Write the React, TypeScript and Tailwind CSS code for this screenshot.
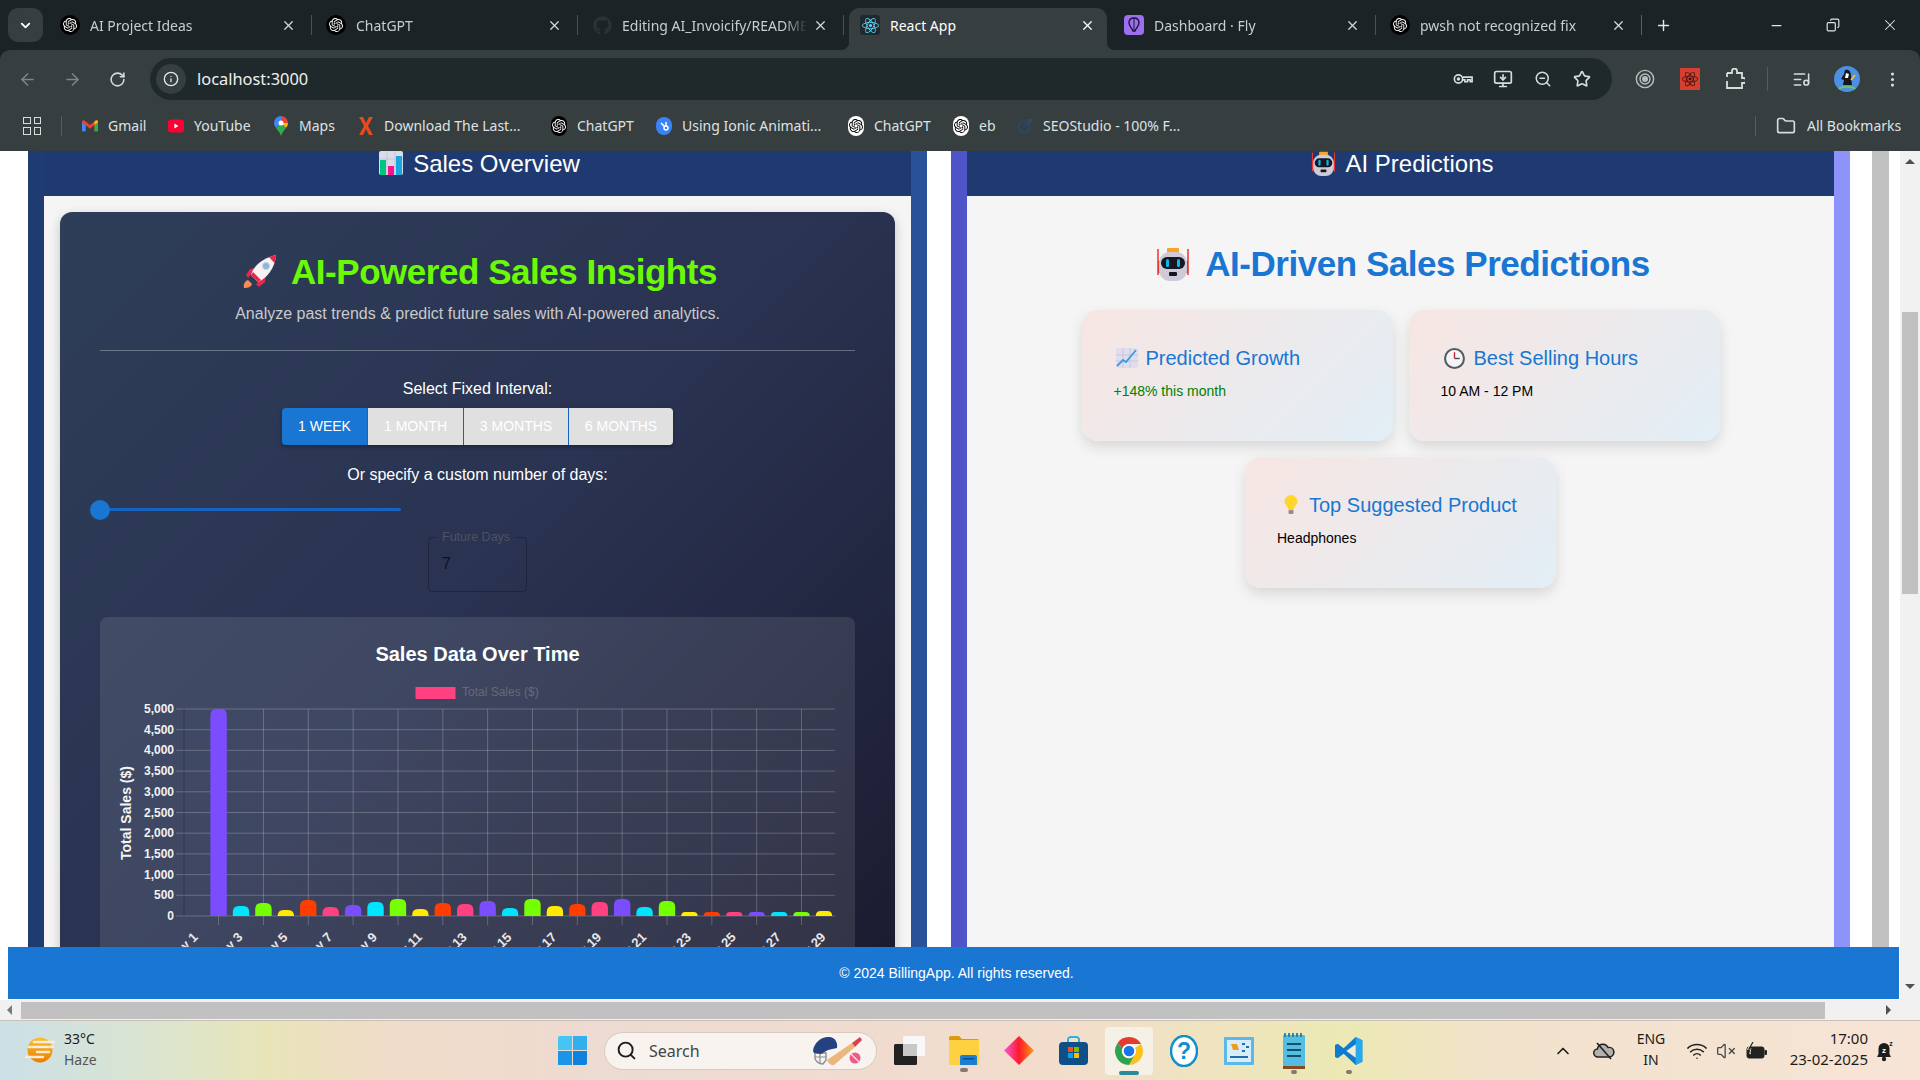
import {
  ArrowLeft,
  ArrowRight,
  ChevronDown,
  ChevronUp,
  Copy,
  Folder,
  Info,
  ListMusic,
  MonitorDown,
  MoreVertical,
  Minus,
  Plus,
  RotateCw,
  Search,
  Star,
  VolumeX,
  Wifi,
  X,
  ZoomOut,
} from "lucide-react";
import { FaGithub } from "react-icons/fa";
import { SiOpenai, SiReact } from "react-icons/si";

const chromeFont = "font-['Noto_Sans',sans-serif]";

function GptIcon({ white = false }: { white?: boolean }) {
  return (
    <span className={`flex h-[20px] w-[20px] items-center justify-center rounded-full ${white ? "bg-white" : "bg-black"}`}>
      <SiOpenai size={14} color={white ? "#000" : "#fff"} />
    </span>
  );
}

function Tab({ icon, label, active, last }: { icon: React.ReactNode; label: string; active?: boolean; last?: boolean }) {
  if (active) {
    return (
      <div className="relative ml-[3px] mr-[5px] mt-[8px] flex h-[42px] w-[258px] items-center rounded-t-[10px] bg-[#363e40] pb-[8px] pl-[11px]">
        <span className="absolute bottom-0 left-[-8px] h-[8px] w-[8px] bg-[radial-gradient(circle_at_0_0,transparent_8px,#363e40_8.5px)]" />
        <span className="absolute bottom-0 right-[-8px] h-[8px] w-[8px] bg-[radial-gradient(circle_at_100%_0,transparent_8px,#363e40_8.5px)]" />
        <span className="flex h-[20px] w-[20px] shrink-0 items-center justify-center rounded-[3px] bg-[#22292c]">{icon}</span>
        <span className="ml-[10px] flex-1 truncate text-[14px] text-white">{label}</span>
        <X size={15} color="#fff" className="mr-[12px]" />
      </div>
    );
  }
  return (
    <div className="mt-[8px] flex h-[42px] w-[266px] items-center pb-[8px] pl-[12px]">
      <span className="flex h-[20px] w-[20px] shrink-0 items-center justify-center">{icon}</span>
      <span className="ml-[10px] flex-1 overflow-hidden whitespace-nowrap text-[14px] text-[#c9cdce] [mask-image:linear-gradient(90deg,#000_88%,transparent)]">{label}</span>
      <X size={15} color="#d5d8d9" className="ml-[6px] shrink-0" />
      <span className={`ml-[15px] mr-[2px] h-[20px] w-px shrink-0 ${last ? "bg-[#5a6163]" : "bg-[#4a5255]"}`} />
    </div>
  );
}

function TabStrip() {
  return (
    <div className={`flex h-[50px] shrink-0 items-start bg-[#1c2326] ${chromeFont}`}>
      <div className="ml-[8px] mr-[5px] mt-[8px] flex h-[34px] w-[35px] items-center justify-center rounded-[10px] bg-[#363e40]">
        <ChevronDown size={15} color="#fff" strokeWidth={3} />
      </div>
      <Tab icon={<GptIcon />} label="AI Project Ideas" />
      <Tab icon={<GptIcon />} label="ChatGPT" />
      <Tab icon={<FaGithub size={19} color="#2b3235" />} label="Editing AI_Invoicify/README.md" />
      <Tab active icon={<SiReact size={17} color="#61dafb" />} label="React App" />
      <Tab
        icon={
          <span className="flex h-[20px] w-[20px] items-center justify-center rounded-[4px] bg-[#9d6ff0]">
            <svg width="12" height="16" viewBox="0 0 12 16">
              <path d="M6 1C3 1 1 3 1 6c0 3 3 5 4 8h2c1-3 4-5 4-8 0-3-2-5-5-5Z" fill="none" stroke="#1c1530" strokeWidth="1.4" />
              <path d="M6 1v13" stroke="#1c1530" strokeWidth="1" />
            </svg>
          </span>
        }
        label="Dashboard · Fly"
      />
      <Tab last icon={<GptIcon />} label="pwsh not recognized fix" />
      <Plus size={17} color="#e2e4e5" className="ml-[11px] mt-[17px]" />
      <Minus size={15} color="#e2e4e5" className="ml-[97px] mt-[18px]" />
      <Copy size={14} color="#e2e4e5" className="ml-[42px] mt-[18px] -scale-x-100" />
      <X size={18} color="#e2e4e5" strokeWidth={1.4} className="ml-[41px] mt-[16px]" />
    </div>
  );
}

function ToolIcon({ children, className }: { children: React.ReactNode; className: string }) {
  return <span className={`flex h-[20px] w-[20px] shrink-0 items-center justify-center ${className}`}>{children}</span>;
}

function Toolbar() {
  return (
    <div className="h-[50px] shrink-0 bg-[#1c2326]">
      <div className={`flex h-[50px] items-center rounded-t-[10px] bg-[#363e40] pt-[8px] ${chromeFont}`}>
        <ToolIcon className="ml-[17px]"><ArrowLeft size={19} color="#7e8587" /></ToolIcon>
        <ToolIcon className="ml-[25px]"><ArrowRight size={19} color="#7e8587" /></ToolIcon>
        <ToolIcon className="ml-[25px]"><RotateCw size={17} color="#d8dbdc" strokeWidth={2.2} /></ToolIcon>
        <div className="ml-[23px] flex h-[42px] w-[1462px] shrink-0 items-center rounded-full bg-[#1f282b]">
          <span className="ml-[6px] flex h-[30px] w-[30px] items-center justify-center rounded-full bg-[#363e40]">
            <Info size={16} color="#e4e6e7" />
          </span>
          <span className="ml-[11px] w-[112px] whitespace-nowrap text-[16.4px] text-[#eef0f0]">localhost:3000</span>
          <ToolIcon className="ml-[1144px]">
            <svg width="22" height="14" viewBox="0 0 22 14" fill="none" stroke="#d8dbdc" strokeWidth="1.800">
              <circle cx="6" cy="7" r="4.500" />
              <circle cx="6" cy="7" r="1" fill="#d8dbdc" />
              <path d="M10.500 5H21v5h-2V8h-3v2h-3V8h-2.500" />
            </svg>
          </ToolIcon>
          <ToolIcon className="ml-[20px]"><MonitorDown size={20} color="#d8dbdc" /></ToolIcon>
          <ToolIcon className="ml-[20px]"><ZoomOut size={18} color="#d8dbdc" /></ToolIcon>
          <ToolIcon className="ml-[19px]"><Star size={18} color="#d8dbdc" strokeWidth={2.2} /></ToolIcon>
        </div>
        <ToolIcon className="ml-[23px]">
          <svg width="22" height="22" viewBox="0 0 22 22" fill="none" stroke="#b8bcbd" strokeWidth="1.6">
            <circle cx="11" cy="11" r="9.5" />
            <circle cx="11" cy="11" r="5.5" />
            <circle cx="11" cy="11" r="2.5" fill="#b8bcbd" />
          </svg>
        </ToolIcon>
        <ToolIcon className="ml-[25px]">
          <span className="flex h-[22px] w-[20px] shrink-0 items-center justify-center bg-[#d63f2f]">
            <SiReact size={16} color="#3b1410" />
          </span>
        </ToolIcon>
        <ToolIcon className="ml-[25px]">
          <svg width="20" height="22" viewBox="0 0 20 22" fill="none" stroke="#d8dbdc" strokeWidth="1.800">
            <path d="M2 5h5V3a2.500 2.500 0 0 1 5 0v2h5v5h1.500a2.500 2.500 0 0 1 0 5H17v5H2v-4.500" />
            <path d="M2 5v4M2 13v3" />
          </svg>
        </ToolIcon>
        <span className="ml-[22px] h-[24px] w-px bg-[#555c5f]" />
        <ToolIcon className="ml-[23px]"><ListMusic size={19} color="#d8dbdc" /></ToolIcon>
        <span className="ml-[23px] flex h-[26px] w-[26px] items-center justify-center rounded-full bg-[#4d8fe0]">
          <svg width="20" height="24" viewBox="0 0 20 24">
            <path d="M8 3c4-1 6 2 6 6l1 9H6l1-5-3-1 3-5Z" fill="#14181b" />
            <path d="M9 6l3 1-1 4-3 0Z" fill="#fff" />
            <path d="M14 13l4-5" stroke="#f2c230" strokeWidth="2" />
            <path d="M2 22c2-3 14-3 16 0" stroke="#6ec26a" strokeWidth="2" fill="none" />
          </svg>
        </span>
        <ToolIcon className="ml-[22px]"><MoreVertical size={19} color="#d8dbdc" /></ToolIcon>
      </div>
    </div>
  );
}

function Gmail() {
  return (
    <svg width="18" height="14" viewBox="0 0 18 14">
      <path d="M0 2v10a1 1 0 0 0 1 1h3V6l5 4 5-4v7h3a1 1 0 0 0 1-1V2a2 2 0 0 0-3-1L9 6 3 1a2 2 0 0 0-3 1Z" fill="#ea4335" />
      <path d="M0 2v10a1 1 0 0 0 1 1h3V6L0 3Z" fill="#4285f4" />
      <path d="M18 2v10a1 1 0 0 1-1 1h-3V6l4-3Z" fill="#34a853" />
      <path d="M14 6V2.500L15 1a2 2 0 0 1 3 1v1Z" fill="#fbbc04" />
    </svg>
  );
}

function YouTube() {
  return (
    <svg width="20" height="16" viewBox="0 0 20 16">
      <rect width="20" height="16" rx="4" fill="#ff0033" />
      <path d="M8 5l5 3-5 3Z" fill="#fff" />
    </svg>
  );
}

function MapsPin() {
  return (
    <svg width="14" height="20" viewBox="0 0 14 20">
      <path d="M7 0a7 7 0 0 0-7 7c0 2 1 3.500 2 5l5-5V0Z" fill="#4285f4" />
      <path d="M7 0a7 7 0 0 1 7 7L7 7Z" fill="#ea4335" />
      <path d="M14 7c0 2-1 3.500-2 5L7 7Z" fill="#fbbc04" />
      <path d="M2 12l5-5 5 5c-2 2.500-4 5-5 8-1-3-3-5.500-5-8Z" fill="#34a853" />
      <circle cx="7" cy="7" r="2.500" fill="#fff" />
    </svg>
  );
}

const bookmarks: Array<{ label: string; icon: React.ReactNode; ml: string; w: string }> = [
  { label: "Gmail", icon: <Gmail />, ml: "ml-[20px]", w: "w-[38px]" },
  { label: "YouTube", icon: <YouTube />, ml: "ml-[22px]", w: "w-[58px]" },
  { label: "Maps", icon: <MapsPin />, ml: "ml-[21px]", w: "w-[37px]" },
  {
    label: "Download The Last...",
    icon: (
      <svg width="14" height="18" viewBox="0 0 14 18">
        <path d="M0 0h4l3 6 3-6h4L9 9l5 9h-4l-3-6-3 6H0l5-9Z" fill="#e8491d" />
      </svg>
    ),
    ml: "ml-[22px]",
    w: "w-[137px]",
  },
  { label: "ChatGPT", icon: <GptIcon />, ml: "ml-[30px]", w: "w-[57px]" },
  {
    label: "Using Ionic Animati...",
    icon: (
      <span className="flex h-[18px] w-[18px] items-center justify-center rounded-full bg-[#3b82f6]">
        <svg width="12" height="12" viewBox="0 0 12 12" fill="none" stroke="#fff" strokeWidth="1.500">
          <circle cx="8" cy="8" r="2" />
          <path d="M6.500 6.500 3 3M8 6V2" />
        </svg>
      </span>
    ),
    ml: "ml-[22px]",
    w: "w-[139px]",
  },
  { label: "ChatGPT", icon: <GptIcon white />, ml: "ml-[27px]", w: "w-[57px]" },
  { label: "eb", icon: <GptIcon white />, ml: "ml-[22px]", w: "w-[16px]" },
  {
    label: "SEOStudio - 100% F...",
    icon: (
      <svg width="18" height="18" viewBox="0 0 18 18" fill="none" stroke="#2a4a7c" strokeWidth="1.500">
        <circle cx="8" cy="10" r="6.500" />
        <path d="M8 10 16 2M12 2h4v4" />
      </svg>
    ),
    ml: "ml-[22px]",
    w: "w-[141px]",
  },
];

function BookmarkBar() {
  return (
    <div className={`flex h-[51px] shrink-0 items-center bg-[#363e40] text-[14px] text-[#dfe2e3] ${chromeFont}`}>
      <div className="ml-[23px] grid h-[18px] w-[18px] shrink-0 grid-cols-2 gap-[3px]">
        <span className="border-[1.5px] border-[#d8dbdc]" />
        <span className="border-[1.5px] border-[#d8dbdc]" />
        <span className="border-[1.5px] border-[#d8dbdc]" />
        <span className="border-[1.5px] border-[#d8dbdc]" />
      </div>
      <span className="ml-[20px] h-[20px] w-px shrink-0 bg-[#555c5f]" />
      {bookmarks.map((b, i) => (
        <div key={i} className={`flex shrink-0 items-center ${b.ml}`}>
          <span className="flex h-[20px] w-[16px] items-center justify-center">{b.icon}</span>
          <span className={`ml-[10px] whitespace-nowrap ${b.w}`}>{b.label}</span>
        </div>
      ))}
      <span className="ml-[571px] h-[20px] w-px shrink-0 bg-[#555c5f]" />
      <Folder size={20} color="#d8dbdc" className="ml-[20px] shrink-0" />
      <span className="ml-[11px] whitespace-nowrap">All Bookmarks</span>
    </div>
  );
}

/* ---- emoji drawings ---- */

function BarsEmoji({ className }: { className: string }) {
  return (
    <svg className={className} viewBox="0 0 24 24">
      <rect width="24" height="24" rx="2" fill="#dcdbe8" />
      <path d="M0 8h24M0 16h24M8 0v24M16 0v24" stroke="#c6c4d8" strokeWidth="1" />
      <rect x="1" y="9" width="6" height="15" fill="#00c77d" />
      <rect x="9" y="15" width="6" height="9" fill="#f5158f" />
      <rect x="17" y="5" width="6" height="19" fill="#18a8e0" />
    </svg>
  );
}

function RobotEmoji({ className }: { className: string }) {
  return (
    <svg className={className} viewBox="0 0 34 34">
      <path d="M2 2v26M32 2v26" stroke="#e8352e" strokeWidth="1.500" />
      <rect x="2" y="14" width="2" height="12" fill="#e8352e" />
      <rect x="30" y="14" width="2" height="12" fill="#e8352e" />
      <rect x="11" y="1" width="12" height="5" rx="1" fill="#f6a623" />
      <rect x="3" y="5" width="28" height="29" rx="11" fill="#cfcad9" />
      <rect x="5" y="10" width="24" height="12" rx="6" fill="#15181f" />
      <rect x="10" y="12" width="3" height="8" rx="1.500" fill="#12b5f0" />
      <rect x="21" y="12" width="3" height="8" rx="1.500" fill="#12b5f0" />
      <rect x="13" y="25" width="8" height="4" rx="1" fill="#15181f" />
    </svg>
  );
}

function RocketEmoji() {
  return (
    <svg className="h-[34px] w-[36px] shrink-0" viewBox="0 0 36 34">
      <path d="M1 33c-1-4 1-7 4-8l4 4c-1 3-4 4-8 4Z" fill="#ff8a50" />
      <path d="M5 23l-2-3 4-6 6-1ZM13 29l3 3 6-5 1-7Z" fill="#e8274b" />
      <path d="M8 20C10 11 20 3 33 0c-1 13-9 23-18 27Z" fill="#f6f2f4" />
      <path d="M26 2 33 0c0 2-.5 5-1.500 8Z" fill="#e8274b" />
      <path d="M8 20l7 7 3-2-8-8Z" fill="#e8274b" />
      <circle cx="23" cy="11" r="3.500" fill="#86b7e0" stroke="#c4d0dc" strokeWidth="1" />
    </svg>
  );
}

function GraphEmoji() {
  return (
    <svg className="mr-[-1px] h-[20px] w-[22px] shrink-0" viewBox="0 0 22 20">
      <rect width="22" height="20" rx="2" fill="#e0deee" />
      <path d="M0 7h22M0 13h22M7 0v20M14 0v20" stroke="#c8c5de" strokeWidth="1" />
      <path d="M1 18l6-6 3 2L20 2" stroke="#3d9be0" strokeWidth="1.800" fill="none" />
    </svg>
  );
}

function ClockEmoji() {
  return (
    <svg className="ml-[1px] h-[21px] w-[21px] shrink-0" viewBox="0 0 20 20">
      <circle cx="10" cy="10" r="9" fill="#f4f4f6" stroke="#555b60" strokeWidth="2" />
      <path d="M10 4v6" stroke="#d02040" strokeWidth="1.300" />
      <path d="M10 10h5" stroke="#44494e" strokeWidth="1.300" />
    </svg>
  );
}

function BulbEmoji() {
  return (
    <svg className="ml-[4px] mr-[1px] h-[20px] w-[16px] shrink-0" viewBox="0 0 16 20">
      <path d="M8 0a6.500 6.500 0 0 0-6.500 6.500C1.500 10 5 11 5.500 15h5c.5-4 4-5 4-8.500A6.500 6.500 0 0 0 8 0Z" fill="#ffd62e" />
      <rect x="5.500" y="15" width="5" height="4" rx="1" fill="#8d8f92" />
    </svg>
  );
}

/* ---- chart ---- */

const barColors = ["#7c4dff", "#00e5ff", "#76ff03", "#ffea00", "#ff3d00", "#ff4081"];
const barHeights = [207, 10, 13, 6, 16, 9, 11, 14, 17, 7, 13, 12, 15, 8, 17, 10, 12, 14, 17, 9, 15, 4, 4, 4, 4, 4, 4, 5];
const yTicks = ["5,000", "4,500", "4,000", "3,500", "3,000", "2,500", "2,000", "1,500", "1,000", "500", "0"];
const days = [1, 3, 5, 7, 9, 11, 13, 15, 17, 19, 21, 23, 25, 27, 29];

function SalesChart() {
  const left = 184;
  const right = 835;
  const top = 709;
  const base = 916;
  const step = 22.42;
  const first = 218.6;
  return (
    <svg className="mt-[14px] block h-[320px] w-[754px]" viewBox="100 680 754 320" fontFamily="'Liberation Sans', sans-serif">
      <rect x="415.500" y="687" width="40" height="12" fill="#ff4081" />
      <text x="462" y="696" fontSize="12" fill="#666a78">Total Sales ($)</text>
      {yTicks.map((t, i) => {
        const y = top + i * 20.7;
        return (
          <g key={t}>
            <line x1={left - 8} x2={right} y1={y} y2={y} stroke="rgba(255,255,255,0.22)" />
            <text x={left - 10} y={y + 4} fontSize="12" fontWeight="700" fill="#f2f2f2" textAnchor="end">{t}</text>
          </g>
        );
      })}
      <line x1={left} x2={left} y1={top} y2={base} stroke="rgba(0,0,0,0.25)" />
      {days.map((d, i) => {
        const x = first + i * step * 2;
        return (
          <g key={d}>
            {x < right && <line x1={x} x2={x} y1={top} y2={base + 9} stroke="rgba(255,255,255,0.22)" />}
            <text
              x={x - 20}
              y={938}
              fontSize="13"
              fontWeight="700"
              fill="#e8e8e8"
              textAnchor="end"
              transform={`rotate(-45 ${x - 20} 938)`}
            >
              Day {d}
            </text>
          </g>
        );
      })}
      {barHeights.map((h, i) => {
        const x = first + i * step - 8.2;
        const r = Math.min(6, h);
        const y = base - h;
        return (
          <path
            key={i}
            d={`M${x} ${base}V${y + r}Q${x} ${y} ${x + r} ${y}H${x + 16.4 - r}Q${x + 16.4} ${y} ${x + 16.4} ${y + r}V${base}Z`}
            fill={barColors[i % 6]}
          />
        );
      })}
      <text
        x="131"
        y="813"
        fontSize="14"
        fontWeight="700"
        fill="#f5f5f5"
        textAnchor="middle"
        transform="rotate(-90 131 813)"
      >
        Total Sales ($)
      </text>
    </svg>
  );
}

function LeftPanel() {
  return (
    <section className="flex h-[846px] w-[899px] shrink-0 flex-col overflow-hidden bg-gradient-to-r from-[#1e3c72] to-[#2a5298] px-[16px]">
      <h2 className="flex h-[45px] shrink-0 items-start justify-center gap-[10px] bg-[#1e3a70] pl-[4px] text-[24px] leading-[25px] text-white">
        <BarsEmoji className="h-[24px] w-[24px]" />
        Sales Overview
      </h2>
      <div className="flex-1 bg-[#f5f5f5] p-[16px]">
        <div className="h-[800px] rounded-[12px] bg-[linear-gradient(135deg,#2e3e58_0%,#2a3352_47%,#1a1a2e_100%)] px-[40px] pt-[43px] text-center shadow-[0_4px_12px_rgba(0,0,0,0.2)]">
          <h1 className="flex h-[34px] items-center justify-center gap-[12px] pl-[5px] text-[35px] font-bold tracking-[-0.47px] text-[#6bfa05]">
            <RocketEmoji />
            AI-Powered Sales Insights
          </h1>
          <p className="mt-[15px] text-[16px] leading-[20px] text-[#c9c9c9]">
            Analyze past trends &amp; predict future sales with AI-powered analytics.
          </p>
          <div className="mt-[26px] h-px bg-white/30" />
          <p className="mt-[28px] text-[16px] leading-[20px] text-white">Select Fixed Interval:</p>
          <div className="mt-[9px] flex justify-center">
            <div className="flex h-[37px] overflow-hidden rounded-[4px] text-[14px] text-white shadow-[0_2px_4px_rgba(0,0,0,0.3)]">
              <span className="flex w-[85px] items-center justify-center bg-[#1976d2]">1 WEEK</span>
              <span className="flex w-[96px] items-center justify-center border-l border-[#1565c0] bg-[#e0e0e0]">1 MONTH</span>
              <span className="flex w-[105px] items-center justify-center border-l border-[#1565c0] bg-[#e0e0e0]">3 MONTHS</span>
              <span className="flex w-[105px] items-center justify-center border-l border-[#1565c0] bg-[#e0e0e0]">6 MONTHS</span>
            </div>
          </div>
          <p className="mt-[20px] text-[16px] leading-[20px] text-white">Or specify a custom number of days:</p>
          <div className="relative mt-[15px] h-[20px] w-[301px]">
            <div className="absolute left-0 right-0 top-[8px] h-[3px] rounded-full bg-[#1565c0]" />
            <div className="absolute left-[-10px] top-0 h-[20px] w-[20px] rounded-full bg-[#1976d2]" />
          </div>
          <div className="relative ml-[328px] mt-[17px] h-[55px] w-[99px] rounded-[4px] border border-black/25 text-left">
            <span className="absolute left-[8px] top-[-8px] bg-[#2a3352] px-[5px] text-[12.5px] leading-[14px] text-[#4c5262]">Future Days</span>
            <span className="absolute left-[13px] top-[16px] text-[16px] leading-[20px] text-[#111]">7</span>
          </div>
          <div className="mt-[25px] h-[500px] rounded-[8px] bg-white/10">
            <h3 className="pt-[25px] text-[20px] font-bold leading-[24px] text-white">Sales Data Over Time</h3>
            <SalesChart />
          </div>
        </div>
      </div>
    </section>
  );
}

function PredictCard({ icon, title, value, valueClass }: { icon: React.ReactNode; title: string; value: string; valueClass: string }) {
  return (
    <div className="h-[131px] w-[311px] rounded-[16px] bg-[linear-gradient(135deg,#f7e6e2,#e2eef6)] pl-[32px] pt-[37px] shadow-[0_6px_14px_rgba(0,0,0,0.12)]">
      <div className="flex h-[22px] items-center gap-[9px] pl-[2px] text-[20px] text-[#1976d2]">
        {icon}
        {title}
      </div>
      <p className={`mt-[11px] text-[14px] leading-[22px] ${valueClass}`}>{value}</p>
    </div>
  );
}

function RightPanel() {
  return (
    <section className="flex h-[846px] w-[899px] shrink-0 flex-col overflow-hidden bg-gradient-to-r from-[#4e54c8] to-[#8f94fb] px-[16px]">
      <h2 className="flex h-[45px] shrink-0 items-start justify-center gap-[9px] bg-[#1e3a70] pl-[4px] text-[24px] leading-[25px] text-white">
        <RobotEmoji className="h-[25px] w-[25px]" />
        AI Predictions
      </h2>
      <div className="flex flex-1 flex-col items-center bg-[#f5f5f5] pt-[51px]">
        <h1 className="flex h-[34px] items-center gap-[15px] pl-[5px] text-[35px] font-bold tracking-[-0.47px] text-[#1976d2]">
          <RobotEmoji className="h-[34px] w-[34px]" />
          AI-Driven Sales Predictions
        </h1>
        <div className="mt-[29px] flex w-[640px] flex-wrap justify-center gap-[16px]">
          <PredictCard icon={<GraphEmoji />} title="Predicted Growth" value="+148% this month" valueClass="text-[#008000]" />
          <PredictCard icon={<ClockEmoji />} title="Best Selling Hours" value="10 AM - 12 PM" valueClass="text-black" />
          <PredictCard icon={<BulbEmoji />} title="Top Suggested Product" value="Headphones" valueClass="text-black" />
        </div>
      </div>
    </section>
  );
}

function Page() {
  return (
    <div className="flex h-[869px] shrink-0 bg-white">
      <div className="flex w-[1900px] flex-col">
        <div className="relative flex h-[849px] overflow-hidden bg-white pl-[28px] font-['Liberation_Sans',sans-serif]">
          <LeftPanel />
          <div className="w-[24px] shrink-0" />
          <RightPanel />
          <div className="ml-[22px] h-[846px] w-[17px] shrink-0 bg-[#c1c1c1]" />
          <footer className="absolute left-[8px] top-[796px] flex h-[52px] w-[1891px] items-center justify-center bg-[#1976d2] pl-[6px] text-[14px] text-white">
            © 2024 BillingApp. All rights reserved.
          </footer>
        </div>
        <div className="flex h-[20px] items-center bg-[#f1f1f1]">
          <span className="ml-[7px] h-0 w-0 border-y-[5px] border-r-[5px] border-y-transparent border-r-[#7a7a7a]" />
          <div className="ml-[9px] h-[17px] w-[1804px] bg-[#c1c1c1]" />
          <span className="ml-[61px] h-0 w-0 border-y-[5px] border-l-[5px] border-y-transparent border-l-[#505050]" />
        </div>
      </div>
      <div className="flex w-[20px] flex-col items-center bg-[#f1f1f1]">
        <span className="mt-[8px] h-0 w-0 border-x-[5px] border-b-[5px] border-x-transparent border-b-[#505050]" />
        <div className="mt-[148px] h-[282px] w-[16px] bg-[#c1c1c1]" />
        <span className="mt-[390px] h-0 w-0 border-x-[5px] border-t-[5px] border-x-transparent border-t-[#505050]" />
      </div>
    </div>
  );
}

/* ---- taskbar ---- */

function ChromeLogo() {
  return (
    <svg width="30" height="30" viewBox="0 0 30 30">
      <path d="M15 1a14 14 0 0 1 12.100 7H15a7 7 0 0 0-6.400 4L3.300 7.400A14 14 0 0 1 15 1Z" fill="#e33b2e" />
      <path d="M27.100 8A14 14 0 0 1 15 29l6.100-10.500A7 7 0 0 0 21 12Z" fill="#fbc116" />
      <path d="M3.300 7.400A14 14 0 0 0 15 29l6-10.500a7 7 0 0 1-12.400-6.500Z" fill="#2fa24f" />
      <circle cx="15" cy="15" r="6.800" fill="#fff" />
      <circle cx="15" cy="15" r="5.300" fill="#1a73e8" />
    </svg>
  );
}

function Taskbar() {
  return (
    <div className="flex h-[60px] shrink-0 items-center border-t border-[#c9c0b8] bg-[linear-gradient(90deg,#cbe0e8_0%,#dfe5c8_10%,#e8e4b8_14%,#f0dcc8_20%,#eddad2_33%,#f2ddcc_55%,#ece9b4_70%,#f2e2cc_78%,#f7e4d6_100%)] font-['Noto_Sans',sans-serif] text-[#1c1c1c]">
      <svg className="ml-[25px] mt-[-1px] shrink-0" width="30" height="26" viewBox="0 0 30 26">
        <defs>
          <linearGradient id="sun" x1="0" y1="0" x2="0" y2="1">
            <stop offset="0" stopColor="#fbc02d" />
            <stop offset="1" stopColor="#ef7c00" />
          </linearGradient>
        </defs>
        <circle cx="15" cy="13" r="12.500" fill="url(#sun)" />
        <path d="M9 5h20M4 10h24M12 15h12M0 20h18" stroke="#f8ecd4" strokeWidth="2.600" strokeLinecap="round" />
      </svg>
      <div className="ml-[9px] w-[40px] shrink-0 pb-[3px] text-[14px] leading-[21px]">
        <div>33°C</div>
        <div className="text-[#555]">Haze</div>
      </div>
      <div className="ml-[454px] grid h-[29px] w-[29px] shrink-0 grid-cols-2 gap-[1.500px]">
        <span className="rounded-tl-[2px] bg-[#45c5f5]" />
        <span className="bg-[#35aef0]" />
        <span className="bg-[#1a95e8]" />
        <span className="rounded-br-[2px] bg-[#0f80dc]" />
      </div>
      <div className="ml-[17px] flex h-[38px] w-[273px] shrink-0 items-center rounded-full border border-[#d5cbc0] bg-[#f8f3ee]">
        <Search size={21} color="#1c1c1c" className="ml-[11px]" strokeWidth={2.2} />
        <span className="ml-[12px] text-[16px] text-[#444]">Search</span>
        <svg className="ml-[112px]" width="52" height="30" viewBox="0 0 52 30">
          <path d="M3 17v5c0 3 4 6 8 6l3-4V17Z" fill="none" stroke="#8a8f96" strokeWidth="1.400" />
          <path d="M3 21h11M8 17v10" stroke="#8a8f96" strokeWidth="1.200" />
          <path d="M1 15C2 6 10 0 18 1c5 1 8 5 7 11l-9 2-7 4-7-1Z" fill="#26417f" />
          <path d="M15 24 40 7l3 4-21 18c-3 1-6-2-7-5Z" fill="#eab87d" />
          <path d="M40 7l8-6 2 3-7 7Z" fill="#d94050" />
          <circle cx="43" cy="22" r="5.500" fill="#ee5a84" />
          <path d="M39 18l8 8" stroke="#fbe3ea" strokeWidth="1.200" />
        </svg>
      </div>
      <svg className="ml-[17px] shrink-0" width="31" height="29" viewBox="0 0 31 29">
        <rect x="9" y="0" width="22" height="20" rx="1.500" fill="#f8f8f8" />
        <rect x="0" y="8" width="23" height="21" rx="1.500" fill="#222" />
        <rect x="9" y="8" width="14" height="12" fill="#c8c8c8" />
      </svg>
      <div className="relative ml-[24px] shrink-0">
        <svg width="30" height="29" viewBox="0 0 30 29">
          <path d="M0 2a2 2 0 0 1 2-2h8l3 3h15a2 2 0 0 1 2 2v4H0Z" fill="#d99a12" />
          <rect x="0" y="4" width="30" height="25" rx="1" fill="#fdd13f" />
          <path d="M11 21a2 2 0 0 1 2-2h13a2 2 0 0 1 2 2v8H11Z" fill="#1a7fd4" />
          <rect x="14" y="22" width="11" height="1.500" fill="#0b4f8a" />
        </svg>
        <span className="absolute bottom-[-7px] left-[11px] h-[4px] w-[8px] rounded-full bg-[#807a70]" />
      </div>
      <svg className="ml-[25px] shrink-0" width="30" height="29" viewBox="0 0 30 29">
        <defs>
          <linearGradient id="diamond" x1="0" y1="0" x2="1" y2="0">
            <stop offset="0" stopColor="#f35ad8" />
            <stop offset="0.500" stopColor="#ff1a2a" />
            <stop offset="1" stopColor="#ff9a10" />
          </linearGradient>
        </defs>
        <path d="M15 0l15 14.500L15 29 0 14.500Z" fill="url(#diamond)" />
      </svg>
      <svg className="ml-[25px] shrink-0" width="29" height="29" viewBox="0 0 29 29">
        <path d="M9 6V3a3 3 0 0 1 3-2h5a3 3 0 0 1 3 2v3" fill="none" stroke="#2ab0e8" strokeWidth="2" />
        <rect y="6" width="29" height="23" rx="4" fill="#0e4f88" />
        <rect x="9" y="11" width="5" height="5" fill="#f25022" />
        <rect x="15" y="11" width="5" height="5" fill="#7fba00" />
        <rect x="9" y="17" width="5" height="5" fill="#00a4ef" />
        <rect x="15" y="17" width="5" height="5" fill="#ffb900" />
      </svg>
      <div className="relative ml-[17px] flex h-[48px] w-[48px] shrink-0 items-center justify-center rounded-[4px] bg-[#f6f1e6]">
        <ChromeLogo />
        <span className="absolute bottom-0 left-[14px] h-[4px] w-[20px] rounded-full bg-[#2a8a9a]" />
      </div>
      <svg className="ml-[17px] shrink-0" width="28" height="32" viewBox="0 0 28 32">
        <ellipse cx="14" cy="16" rx="13" ry="15" fill="#fff" stroke="#0f8fd0" strokeWidth="2.500" />
        <text x="14" y="24" fontSize="23" fontWeight="700" fill="#0f8fd0" textAnchor="middle" fontFamily="'Liberation Sans', sans-serif">?</text>
      </svg>
      <svg className="ml-[26px] shrink-0" width="30" height="28" viewBox="0 0 30 28">
        <rect width="30" height="28" rx="1" fill="#5cb7ea" />
        <rect x="3" y="3" width="24" height="22" fill="#d7eefa" />
        <path d="M7 7h6l2 6H9Z" fill="#f09a20" />
        <path d="M18 7h3M22 10h3M18 14h3M6 20h18" stroke="#1f6fb0" strokeWidth="2" />
      </svg>
      <div className="relative ml-[29px] shrink-0">
        <svg width="22" height="36" viewBox="0 0 22 36">
          <rect y="2" width="22" height="32" rx="1" fill="#55bde0" />
          <path d="M2 0v4M6 0v4M10 0v4M14 0v4M18 0v4" stroke="#1a7fa8" strokeWidth="1.800" />
          <path d="M4 11h14M4 17h14M4 23h14" stroke="#14506e" strokeWidth="2" />
          <rect y="33" width="22" height="3" fill="#8a4a20" />
        </svg>
        <span className="absolute bottom-[-5px] left-[8px] h-[4px] w-[6px] rounded-full bg-[#807a70]" />
      </div>
      <div className="relative ml-[28px] shrink-0">
        <svg width="32" height="32" viewBox="0 0 24 24">
          <path d="M17 1.500 8 10 3.500 6.500 1.500 7.500v9l2 1L8 14l9 8.500 5-2.500V4Z" fill="#0f7ccc" />
          <path d="M17 1.500 22 4v16l-5 2.500Z" fill="#25a9ef" />
          <path d="M17 7 10 12l7 5Z" fill="#f4ecd8" />
        </svg>
        <span className="absolute bottom-[-7px] left-[13px] h-[4px] w-[6px] rounded-full bg-[#807a70]" />
      </div>
      <ChevronUp size={20} color="#1c1c1c" className="ml-[188px] shrink-0" />
      <svg className="ml-[20px] shrink-0" width="22" height="20" viewBox="0 0 22 20">
        <path d="M5 16a4 4 0 0 1-.500-8A5.500 5.500 0 0 1 15 6.500a4.800 4.800 0 0 1 2 9.500Z" fill="#b4b2ae" stroke="#222" strokeWidth="1.500" />
        <path d="M4 2l14 16" stroke="#222" strokeWidth="1.600" />
      </svg>
      <div className="ml-[20px] w-[32px] shrink-0 pb-[3px] text-center text-[14px] leading-[21px]">
        <div>ENG</div>
        <div>IN</div>
      </div>
      <Wifi size={22} color="#222" strokeWidth={1.7} className="ml-[19px] shrink-0" />
      <VolumeX size={20} color="#444" strokeWidth={1.5} className="ml-[8px] shrink-0" />
      <svg className="ml-[10px] shrink-0" width="22" height="18" viewBox="0 0 22 18">
        <rect x="1" y="5" width="17" height="11" rx="2" fill="#222" stroke="#222" />
        <rect x="18.500" y="8" width="2.500" height="5" rx="1" fill="#222" />
        <path d="M6 0 2 7h3l-1 5" fill="none" stroke="#f5e8d0" strokeWidth="1.400" />
        <path d="M7 0 3 7h3L5 11" fill="none" stroke="#222" strokeWidth="1.200" />
      </svg>
      <div className="ml-[18px] w-[82px] shrink-0 whitespace-nowrap pb-[3px] text-right text-[15px] leading-[21px]">
        <div>17:00</div>
        <div>23-02-2025</div>
      </div>
      <svg className="ml-[8px] shrink-0" width="18" height="22" viewBox="0 0 18 22">
        <path d="M8 3a5.500 5.500 0 0 0-5.500 5.500V14L1 17h14l-1.500-3V8.500A5.500 5.500 0 0 0 8 3Z" fill="#1c1c1c" />
        <circle cx="8" cy="19" r="2.200" fill="#1c1c1c" />
        <text x="8" y="13" fontSize="8" fontWeight="700" fill="#fff" textAnchor="middle" fontFamily="'Liberation Sans', sans-serif">z</text>
        <text x="15" y="6" fontSize="7" fontWeight="700" fill="#1c1c1c" textAnchor="middle" fontFamily="'Liberation Sans', sans-serif">z</text>
      </svg>
    </div>
  );
}

export default function App() {
  return (
    <div className="flex h-[1080px] w-[1920px] flex-col overflow-hidden">
      <TabStrip />
      <Toolbar />
      <BookmarkBar />
      <Page />
      <Taskbar />
    </div>
  );
}
